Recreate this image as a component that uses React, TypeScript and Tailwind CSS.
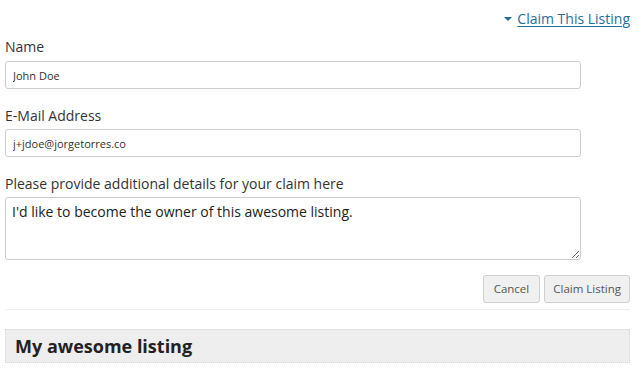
import { useState } from 'react'

export default function App() {
  const [name, setName] = useState('John Doe')
  const [email, setEmail] = useState('j+jdoe@jorgetorres.co')
  const [details, setDetails] = useState("I'd like to become the owner of this awesome listing.")

  return (
    <div className="w-[639px] h-[370px] bg-white overflow-hidden font-['Open_Sans',sans-serif] text-[#333]">
      <div className="pl-[5px] pr-[9px]">
        {/* Claim link */}
        <div className="flex justify-end pt-[8px] h-[30px]">
          <a href="#" className="flex items-center text-[14px] leading-[20px] text-[#1f6e9c] underline underline-offset-2">
            <span className="mr-[5px] inline-block w-0 h-0 border-l-[4px] border-r-[4px] border-t-[4px] border-l-transparent border-r-transparent border-t-[#1f6e9c]" />
            Claim This Listing
          </a>
        </div>

        <form className="flex flex-col">
          <label className="block text-[14px] leading-[20px] mt-[7px] mb-[4px]">Name</label>
          <input
            value={name}
            onChange={(e) => setName(e.target.value)}
            className="w-[576px] h-[28px] px-[7px] text-[11px] text-[#333] border border-[#cccccc] rounded-[3px] outline-none"
          />

          <label className="block text-[14px] leading-[20px] mt-[17px] mb-[3px]">E-Mail Address</label>
          <input
            value={email}
            onChange={(e) => setEmail(e.target.value)}
            className="w-[576px] h-[28px] px-[7px] text-[11px] text-[#333] border border-[#cccccc] rounded-[3px] outline-none"
          />

          <label className="block text-[14px] leading-[20px] mt-[17px] mb-[3px]">Please provide additional details for your claim here</label>
          <textarea
            value={details}
            onChange={(e) => setDetails(e.target.value)}
            className="w-[576px] h-[63px] px-[6px] py-[4px] text-[14px] leading-[20px] text-[#222] border border-[#cccccc] rounded-[3px] outline-none resize-y"
          />

          <div className="flex justify-end gap-[4px] mt-[15px]">
            <button type="button" className="h-[28px] px-[10px] text-[11.5px] text-[#555] bg-[#f0f0f0] border border-[#cfcfcf] rounded-[3px]">
              Cancel
            </button>
            <button type="button" className="h-[28px] px-[8px] text-[11.5px] text-[#555] bg-[#f0f0f0] border border-[#cfcfcf] rounded-[3px]">
              Claim Listing
            </button>
          </div>
        </form>

        <div className="mt-[6px] border-t border-[#eeeeee]" />

        <div className="mt-[19px] h-[34px] flex items-center px-[9px] bg-[#eeeeee] border border-dotted border-[#d8d8d8]">
          <h2 className="text-[18px] font-bold text-[#222]">My awesome listing</h2>
        </div>
      </div>
    </div>
  )
}
